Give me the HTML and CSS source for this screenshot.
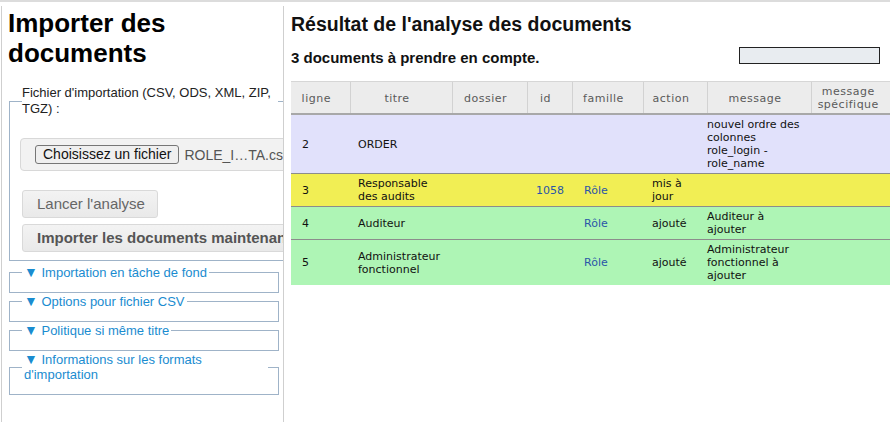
FILE: index.html
```html
<!DOCTYPE html>
<html lang="fr">
<head>
<meta charset="utf-8">
<title>Importer des documents</title>
<link rel="stylesheet" href="styles.css">
</head>
<body>
<div class="page">
  <aside class="import-panel">
    <h1 class="import-title">Importer des documents</h1>
    <fieldset class="file-set">
      <legend class="file-legend">Fichier d'importation (CSV, ODS, XML, ZIP, TGZ) :</legend>
      <div class="file-box">
        <button class="file-button" type="button">Choisissez un fichier</button>
        <span class="file-name">ROLE_I…TA.csv</span>
      </div>
      <div class="action-list">
        <button class="action-button" type="button">Lancer l'analyse</button>
        <button class="action-button action-strong" type="button">Importer les documents maintenant</button>
      </div>
    </fieldset>
    <fieldset class="fold-set"><legend class="fold-legend"><span class="fold-arrow">▼</span> Importation en tâche de fond</legend></fieldset>
    <fieldset class="fold-set"><legend class="fold-legend"><span class="fold-arrow">▼</span> Options pour fichier CSV</legend></fieldset>
    <fieldset class="fold-set"><legend class="fold-legend"><span class="fold-arrow">▼</span> Politique si même titre</legend></fieldset>
    <fieldset class="fold-set"><legend class="fold-legend"><span class="fold-arrow">▼</span> Informations sur les formats d'importation</legend></fieldset>
  </aside>
  <main class="result-panel">
    <h2 class="result-title">Résultat de l'analyse des documents</h2>
    <div class="summary">
      <span class="summary-text">3 documents à prendre en compte.</span>
      <div class="progress"></div>
    </div>
    <table class="result-table">
      <colgroup>
        <col class="col-ligne">
        <col class="col-titre">
        <col class="col-dossier">
        <col class="col-id">
        <col class="col-famille">
        <col class="col-action">
        <col class="col-message">
        <col class="col-specifique">
      </colgroup>
      <thead>
        <tr>
          <th>ligne</th>
          <th>titre</th>
          <th>dossier</th>
          <th>id</th>
          <th>famille</th>
          <th>action</th>
          <th>message</th>
          <th>message spécifique</th>
        </tr>
      </thead>
      <tbody>
        <tr class="row-order">
          <td>2</td>
          <td>ORDER</td>
          <td></td>
          <td></td>
          <td></td>
          <td></td>
          <td>nouvel ordre des colonnes role_login - role_name</td>
          <td></td>
        </tr>
        <tr class="row-update">
          <td>3</td>
          <td>Responsable des audits</td>
          <td></td>
          <td><span class="link">1058</span></td>
          <td><span class="link">Rôle</span></td>
          <td>mis à jour</td>
          <td></td>
          <td></td>
        </tr>
        <tr class="row-add">
          <td>4</td>
          <td>Auditeur</td>
          <td></td>
          <td></td>
          <td><span class="link">Rôle</span></td>
          <td>ajouté</td>
          <td>Auditeur à ajouter</td>
          <td></td>
        </tr>
        <tr class="row-add">
          <td>5</td>
          <td>Administrateur fonctionnel</td>
          <td></td>
          <td></td>
          <td><span class="link">Rôle</span></td>
          <td>ajouté</td>
          <td>Administrateur fonctionnel à ajouter</td>
          <td></td>
        </tr>
      </tbody>
    </table>
  </main>
</div>
</body>
</html>
```

FILE: styles.css
```css
html, body {
  margin: 0;
  padding: 0;
}

body {
  width: 890px;
  height: 422px;
  overflow: hidden;
  background: #fff;
  color: #111;
  font-family: "Liberation Sans", Arial, sans-serif;
}

.page {
  display: flex;
  box-sizing: border-box;
  height: 422px;
  border-top: 2px solid #dcdcdc;
  padding-top: 4px;
}

/* left panel */
.import-panel {
  box-sizing: border-box;
  flex: 0 0 283px;
  margin-left: 1px;
  padding: 2px 0 0 6px;
  border-left: 1px solid #cfcfcf;
  border-right: 1px solid #cfcfcf;
  overflow: hidden;
}

.import-title {
  margin: 0;
  font-size: 26px;
  line-height: 30px;
  font-weight: bold;
  color: #000;
}

.file-set {
  box-sizing: border-box;
  width: 330px;
  margin: 17px 0 0 1px;
  padding: 0 0 8px 10px;
  border: 1px solid #9fb3c8;
  border-right: none;
}

.file-legend {
  width: 256px;
  margin-left: 2px;
  padding: 0;
  font-size: 13px;
  line-height: 16px;
  color: #222;
}

.file-box {
  display: flex;
  align-items: center;
  gap: 5px;
  margin-top: 21px;
  padding: 6px 14px;
  border: 1px solid #d8d8d8;
  border-radius: 4px;
  background: #f2f2f2;
  white-space: nowrap;
}

.file-button {
  margin: 0;
  padding: 0 7px;
  font-family: "Liberation Sans", Arial, sans-serif;
  font-size: 14px;
  line-height: 17px;
  color: #111;
  background: #efefef;
  border: 1px solid #767676;
  border-radius: 3px;
}

.file-name {
  font-size: 14px;
  color: #555;
}

.action-list {
  display: flex;
  flex-direction: column;
  align-items: flex-start;
  gap: 6px;
  margin: 19px 0 0 2px;
}

.action-button {
  margin: 0;
  padding: 4px 12px 4px 14px;
  font-family: "Liberation Sans", Arial, sans-serif;
  font-size: 15px;
  line-height: 18px;
  color: #666;
  white-space: nowrap;
  background: linear-gradient(#f3f3f3, #e9e9e9);
  border: 1px solid #d9d9d9;
  border-radius: 3px;
}

.action-strong {
  font-weight: bold;
  color: #555;
}

.fold-set {
  box-sizing: border-box;
  width: 270px;
  margin: 1px 0 0 1px;
  padding: 0 10px 12px 10px;
  border: 1px solid #9fb3c8;
}

.file-set + .fold-set {
  margin-top: 4px;
}

.fold-legend {
  margin-left: 2px;
  padding: 0 2px;
  font-size: 13px;
  line-height: 15px;
  color: #1a8cd0;
}

.fold-arrow {
  font-size: 14px;
}

/* right panel */
.result-panel {
  flex: 1 1 auto;
  min-width: 0;
  padding: 0 10px 0 7px;
  overflow: hidden;
}

.result-title {
  margin: 7px 0 0;
  font-size: 19.5px;
  line-height: 23px;
  font-weight: bold;
  color: #111;
}

.summary {
  display: flex;
  justify-content: space-between;
  align-items: flex-start;
  margin-top: 11px;
}

.summary-text {
  margin-top: 2px;
  font-size: 15px;
  line-height: 17px;
  font-weight: bold;
  color: #111;
}

.progress {
  box-sizing: border-box;
  width: 141px;
  height: 17px;
  border: 1px solid #222;
  background: #e8ecf0;
}

.result-table {
  width: 602px;
  margin-top: 15px;
  table-layout: fixed;
  border-collapse: collapse;
  font-family: "DejaVu Sans", Verdana, sans-serif;
  font-size: 11px;
}

.col-ligne { width: 59px; }
.col-titre { width: 102px; }
.col-dossier { width: 75px; }
.col-id { width: 45px; }
.col-famille { width: 71px; }
.col-action { width: 64px; }
.col-message { width: 104px; }
.col-specifique { width: 82px; }

.result-table th {
  padding: 3px 10px 2px 2px;
  font-weight: normal;
  line-height: 13px;
  letter-spacing: 0.5px;
  color: #5a5a5a;
  text-align: center;
  vertical-align: middle;
  background: #ececec;
  border-top: 1px solid #d6d6d6;
  border-bottom: 2px solid #a8a8a8;
  border-left: 1px solid #d2d2d2;
}

.result-table th:first-child {
  border-left: none;
}

.result-table td {
  padding: 3px 4px 3px 8px;
  color: #111;
  text-align: left;
  vertical-align: middle;
  border-bottom: 1px solid #8c8c8c;
}

.result-table tbody tr:last-child td {
  border-bottom: none;
}

.result-table td:nth-child(1) { padding-left: 11px; }
.result-table td:nth-child(4) { padding-left: 9px; }
.result-table td:nth-child(5) { padding-left: 12px; }
.result-table td:nth-child(6) { padding-left: 9px; }
.result-table td:nth-child(7) { padding-left: 0; padding-right: 8px; }

.row-order { background: #e1e1fb; }
.row-update { background: #f1ee54; }
.row-add { background: #aef5b5; }

.link {
  color: #2a55a8;
}
```
